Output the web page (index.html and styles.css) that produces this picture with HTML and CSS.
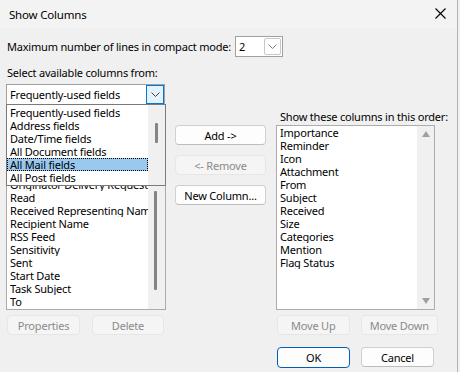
FILE: index.html
```html
<!DOCTYPE html>
<html lang="en">
<head>
    <meta charset="UTF-8">
    <title>Show Columns</title>
    <link rel="stylesheet" href="styles.css">
</head>
<body>
<div class="dialog">
    <!-- Title bar -->
    <div class="titlebar">
        <span class="title">Show Columns</span>
        <svg class="close" width="11" height="11" viewBox="0 0 11 11">
            <path d="M0.5 0.5 L10.5 10.5 M10.5 0.5 L0.5 10.5" stroke="#000" stroke-width="1.1" fill="none"/>
        </svg>
    </div>

    <div class="content">
        <div class="lines-row">
            <span class="text">Maximum number of lines in compact mode:</span>
            <div class="spin">
                <span class="spin-value">2</span>
                <span class="spin-btn">
                    <svg width="9" height="5" viewBox="0 0 9 5"><path d="M0.5 0.5 L4.5 4.5 L8.5 0.5" stroke="#808080" fill="none"/></svg>
                </span>
            </div>
        </div>

        <div class="text select-label">Select available columns from:</div>

        <div class="columns">
            <!-- Left column -->
            <div class="combo-wrap">
                <div class="combo">
                    <span class="combo-text">Frequently-used fields</span>
                    <span class="combo-btn">
                        <svg width="9" height="5" viewBox="0 0 9 5"><path d="M0.5 0.5 L4.5 4.5 L8.5 0.5" stroke="#404040" fill="none"/></svg>
                    </span>
                </div>
                <!-- Open dropdown list, lies over the list box -->
                <div class="dropdown">
                    <ul class="dropdown-items">
                        <li>Frequently-used fields</li>
                        <li>Address fields</li>
                        <li>Date/Time fields</li>
                        <li>All Document fields</li>
                        <li class="selected">All Mail fields</li>
                        <li>All Post fields</li>
                    </ul>
                    <div class="scrollbar">
                        <div class="thumb drop-thumb"></div>
                    </div>
                </div>
            </div>

            <div class="spacer"></div>

            <div class="text right-label">Show these columns in this order:</div>

            <div class="listbox left-list">
                <ul class="items">
                    <!-- rows under the open dropdown -->
                    <li class="covered">Mileage</li>
                    <li class="covered">Modified</li>
                    <li class="covered">Organizer</li>
                    <li class="covered">Originator</li>
                    <li>Originator Delivery Requested</li>
                    <li>Read</li>
                    <li>Received Representing Name</li>
                    <li>Recipient Name</li>
                    <li>RSS Feed</li>
                    <li>Sensitivity</li>
                    <li>Sent</li>
                    <li>Start Date</li>
                    <li>Task Subject</li>
                    <li>To</li>
                </ul>
                <div class="scrollbar">
                    <div class="thumb list-thumb"></div>
                </div>
            </div>

            <!-- Middle buttons -->
            <div class="mid-buttons">
                <button class="btn wide">Add -&gt;</button>
                <button class="btn wide disabled">&lt;- Remove</button>
                <button class="btn wide new-col">New Column...</button>
            </div>

            <div class="listbox right-list">
                <ul class="items">
                    <li>Importance</li>
                    <li>Reminder</li>
                    <li>Icon</li>
                    <li>Attachment</li>
                    <li>From</li>
                    <li>Subject</li>
                    <li>Received</li>
                    <li>Size</li>
                    <li>Categories</li>
                    <li>Mention</li>
                    <li>Flag Status</li>
                </ul>
                <div class="scrollbar arrows">
                    <svg width="8" height="6" viewBox="0 0 8 6"><path d="M0 6 L4 0 L8 6 Z" fill="#a0a0a0"/></svg>
                    <svg width="8" height="6" viewBox="0 0 8 6"><path d="M0 0 L4 6 L8 0 Z" fill="#a0a0a0"/></svg>
                </div>
            </div>

            <div class="btn-row left-buttons">
                <button class="btn disabled">Properties</button>
                <button class="btn disabled small">Delete</button>
            </div>

            <div class="spacer"></div>

            <div class="btn-row right-buttons">
                <button class="btn disabled">Move Up</button>
                <button class="btn disabled down">Move Down</button>
            </div>

            <div class="btn-row footer">
                <button class="btn default">OK</button>
                <button class="btn">Cancel</button>
            </div>
        </div>
    </div>
</div>
</body>
</html>
```

FILE: styles.css
```css
/* Page and dialog frame */
body {
    margin: 0;
    background-color: #f0f0f0;
    font-family: "Noto Sans", "Open Sans", sans-serif;
    font-size: 11px;
    letter-spacing: -0.2px;
    color: #000;
}

.dialog {
    width: 457px;
    height: 372px;
    border-right: 1px solid #b4b4b4;
    background-color: #f0f0f0;
}

/* Title bar */
.titlebar {
    height: 28px;
    background-color: #f3f3f3;
    display: flex;
    align-items: center;
    justify-content: space-between;
    padding: 0 11px 0 9px;
}

.title {
    font-size: 11.5px;
}

.close {
    margin-top: -1px;
}

.content {
    padding: 8px 0 0 6px;
}

.text {
    line-height: 13px;
    padding-left: 1px;
}

/* Compact mode spin row */
.lines-row {
    display: flex;
    align-items: center;
    gap: 4px;
}

.spin {
    width: 42px;
    height: 19px;
    border: 1px solid #a0a0a0;
    background-color: #fff;
    display: flex;
    align-items: center;
    justify-content: space-between;
    padding: 0 1px 0 3px;
}

.spin-btn {
    width: 15px;
    height: 15px;
    border: 1px solid #c8c8c8;
    border-radius: 2px;
    display: flex;
    align-items: center;
    justify-content: center;
}

.select-label {
    margin-top: 9px;
}

/* Main grid of columns */
.columns {
    margin-top: 5px;
    display: grid;
    grid-template-columns: 169px 101px 162px;
    grid-template-rows: 41px 185px auto auto;
}

/* Combo box and open dropdown */
.combo-wrap {
    position: relative;
    width: 159px;
}

.combo {
    height: 19px;
    border: 1px solid #a0a0a0;
    background-color: #fff;
    display: flex;
    align-items: center;
    justify-content: space-between;
}

.combo-text {
    padding-left: 3px;
}

.combo-btn {
    width: 16px;
    height: 17px;
    border: 1px solid #0078d7;
    background-color: #e5f1fb;
    display: flex;
    align-items: center;
    justify-content: center;
}

.dropdown {
    position: absolute;
    top: 20px;
    left: 0;
    width: 158px;
    height: 80px;
    border: 1px solid #7a7a7a;
    background-color: #fff;
    display: flex;
    z-index: 10;
}

.dropdown-items {
    list-style: none;
    margin: 0;
    padding: 1px 0 0 0;
    flex: 1;
}

.dropdown-items li {
    height: 13px;
    line-height: 13px;
    padding-left: 3px;
    white-space: nowrap;
}

.dropdown-items li.selected {
    background-color: #99c9ef;
    outline: 1px dotted #000;
    outline-offset: -1px;
}

/* Scrollbars */
.scrollbar {
    width: 17px;
    background-color: #f0f0f0;
    flex-shrink: 0;
}

.thumb {
    width: 3px;
    background-color: #858585;
    border-radius: 1px;
}

.drop-thumb {
    margin: 18px 0 0 7px;
    height: 20px;
}

.list-thumb {
    margin: 65px 0 0 6px;
    height: 99px;
}

.arrows {
    display: flex;
    flex-direction: column;
    justify-content: space-between;
    align-items: center;
    padding: 5px 0 5px 0;
    box-sizing: border-box;
}

/* List boxes */
.listbox {
    border: 1px solid #acacac;
    background-color: #fff;
    display: flex;
    overflow: hidden;
    box-sizing: border-box;
    height: 185px;
}

.left-list {
    width: 160px;
}

.right-list {
    width: 159px;
}

.items {
    list-style: none;
    margin: 0;
    padding: 0;
    flex: 1;
    overflow: hidden;
}

.items li {
    height: 13px;
    line-height: 13px;
    padding-left: 3px;
    white-space: nowrap;
    overflow: hidden;
}

.items li.covered {
    visibility: hidden;
}

.right-label {
    align-self: end;
    padding-left: 4px;
    margin-bottom: 2px;
    white-space: nowrap;
}

/* Buttons */
.btn {
    font-family: inherit;
    font-size: 11px;
    letter-spacing: -0.2px;
    width: 73px;
    height: 20px;
    padding: 0;
    background-color: #fdfdfd;
    border: 1px solid #d0d0d0;
    border-bottom-color: #bdbdbd;
    border-radius: 4px;
    color: #000;
    line-height: 17px;
}

.btn.disabled {
    background-color: #f5f5f5;
    border-color: #e6e6e6;
    color: #8a8a8a;
}

.btn.default {
    border-color: #005fb8;
    height: 21px;
}

.btn.wide {
    width: 91px;
}

.btn.small {
    width: 72px;
}

.btn.down {
    width: 78px;
}

.mid-buttons {
    display: flex;
    flex-direction: column;
    align-items: flex-start;
}

.mid-buttons .btn + .btn {
    margin-top: 10px;
}

.mid-buttons .new-col {
    margin-top: 17px;
}

.btn-row {
    display: flex;
    gap: 12px;
    padding-left: 1px;
    margin-top: 5px;
}

.right-buttons {
    gap: 11px;
}

.footer {
    grid-column: 3;
    gap: 11px;
    margin-top: 12px;
}
```
